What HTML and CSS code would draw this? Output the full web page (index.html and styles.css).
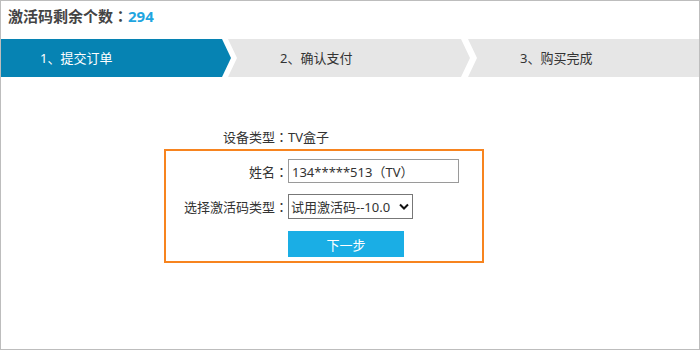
FILE: index.html
```html
<!DOCTYPE html>
<html lang="zh-CN">
<head>
<meta charset="utf-8">
<title>激活码</title>
<link rel="stylesheet" href="styles.css">
</head>
<body>
<div class="frame">
  <h1 class="title">激活码剩余个数<span class="colon" lang="zh-TW">：</span><span class="count">294</span></h1>
  <div class="steps">
    <div class="step step-first active">1、提交订单</div>
    <div class="step step-mid">2、确认支付</div>
    <div class="step step-last">3、购买完成</div>
  </div>
  <div class="form">
    <div class="row info-row">
      <span class="label">设备类型<span class="colon" lang="zh-TW">：</span></span>
      <span class="value">TV盒子</span>
    </div>
    <div class="box">
      <div class="row field-row">
        <label class="label" for="name">姓名<span class="colon" lang="zh-TW">：</span></label>
        <input id="name" class="text-input" type="text" value="134*****513（TV）">
      </div>
      <div class="row field-row">
        <label class="label" for="type">选择激活码类型<span class="colon" lang="zh-TW">：</span></label>
        <div class="select-wrap">
          <select id="type" class="select"><option>试用激活码--10.0</option></select>
          <svg class="caret" width="10" height="7" viewBox="0 0 10 7"><path d="M1 1.5 L5 5.5 L9 1.5" fill="none" stroke="#111" stroke-width="2"/></svg>
        </div>
      </div>
      <div class="row field-row">
        <span class="label"></span>
        <button class="btn" type="button">下一步</button>
      </div>
    </div>
  </div>
</div>
</body>
</html>
```
FILE: styles.css
```css
html, body {
  margin: 0;
  padding: 0;
  background: #fff;
}
body {
  font-family: "Noto Sans", "Noto Sans CJK SC", sans-serif;
  color: #333;
  font-size: 13px;
}
.colon {
  font-family: "Noto Sans CJK TC", sans-serif;
}
.frame {
  width: 700px;
  height: 350px;
  box-sizing: border-box;
  border: 1px solid #bdbdbd;
}
.title {
  margin: 0;
  padding-left: 7px;
  height: 38px;
  line-height: 29px;
  font-size: 15px;
  font-weight: bold;
  color: #444;
}
.count {
  color: #1fa5e0;
}
.steps {
  display: flex;
  height: 38px;
}
.step {
  height: 38px;
  line-height: 38px;
  box-sizing: border-box;
  font-size: 13px;
  background: #e6e6e6;
  color: #333;
  padding-left: 52px;
}
.step-first {
  width: 230px;
  padding-left: 39px;
  clip-path: polygon(0 0, calc(100% - 9px) 0, 100% 50%, calc(100% - 9px) 100%, 0 100%);
}
.step-mid {
  width: 242px;
  margin-left: -3px;
  clip-path: polygon(0 0, calc(100% - 9px) 0, 100% 50%, calc(100% - 9px) 100%, 0 100%, 9px 50%);
}
.step-last {
  flex: 1;
  margin-left: -2px;
  clip-path: polygon(0 0, 100% 0, 100% 100%, 0 100%, 9px 50%);
}
.step.active {
  background: #0683b3;
  color: #fff;
}
.form {
  margin-left: 163px;
  margin-top: 51px;
  width: 320px;
}
.row {
  display: grid;
  grid-template-columns: 124px auto;
  align-items: center;
}
.label {
  text-align: right;
  white-space: nowrap;
}
.info-row {
  height: 18px;
  line-height: 18px;
}
.box {
  margin-top: 3px;
  border: 2px solid #f7841f;
  padding: 8px 0 4px;
  display: flex;
  flex-direction: column;
  gap: 11px;
}
.box .row {
  grid-template-columns: 122px auto;
}
.text-input {
  width: 171px;
  height: 24px;
  box-sizing: border-box;
  border: 1px solid #9a9a9a;
  padding: 0 3px;
  font-family: inherit;
  font-size: 13px;
  color: #333;
  margin: 0;
  outline: none;
}
.select-wrap {
  position: relative;
  width: 125px;
  height: 25px;
}
.select {
  appearance: none;
  -webkit-appearance: none;
  width: 125px;
  height: 25px;
  box-sizing: border-box;
  border: 1px solid #777;
  border-radius: 0;
  background: #fff;
  padding: 0 2px;
  font-family: inherit;
  font-size: 13px;
  color: #333;
  margin: 0;
}
.caret {
  position: absolute;
  right: 4px;
  top: 9px;
  pointer-events: none;
}
.btn {
  width: 116px;
  height: 26px;
  border: none;
  background: #1aaee5;
  color: #fff;
  font-family: inherit;
  font-size: 13px;
  padding: 0;
  margin-top: 1px;
}
```
